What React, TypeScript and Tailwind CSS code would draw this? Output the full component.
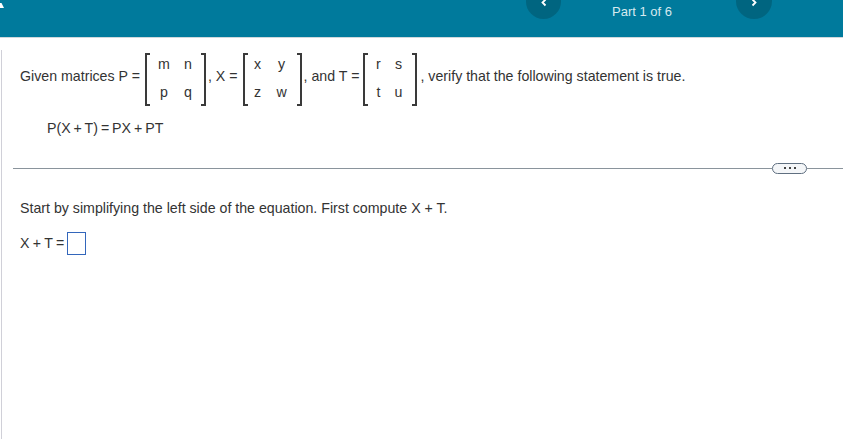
function Bracket({ side }: { side: "l" | "r" }) {
  return (
    <div
      className={
        side === "l"
          ? "w-[5px] h-[53px] mt-[4px] border-l-2 border-y-2 border-[#3a3a3a]"
          : "w-[5px] h-[53px] mt-[4px] border-r-2 border-y-2 border-[#3a3a3a]"
      }
    />
  );
}

function Matrix({ rows, inner }: { rows: string[][]; inner: string }) {
  return (
    <div className="flex items-center">
      <Bracket side="l" />
      <div className={inner}>
        {rows.flat().map((c, i) => (
          <span key={i} className="text-center leading-[16px]">
            {c}
          </span>
        ))}
      </div>
      <Bracket side="r" />
    </div>
  );
}

export default function App() {
  return (
    <div className="w-[843px] h-[439px] overflow-hidden bg-white font-['Liberation_Sans',Arial,sans-serif] text-[14.2px] text-[#333333]">
      <header className="h-[38px] bg-[#007a9c] border-b border-[#cfd8dc] flex items-start">
        <svg width="4" height="9" viewBox="0 0 4 9" className="shrink-0">
          <path d="M0 3 L1.5 3 L4 8 L0 8 Z" fill="#ffffff" />
        </svg>
        <div className="ml-[522px] w-[35px] h-[19px] rounded-b-full bg-[#006580] flex justify-center items-start">
          <svg width="8" height="8" viewBox="0 0 8 8" className="-mt-[1px]">
            <path d="M5.5 0.5 L2.5 3.5 L5.5 6.5" fill="none" stroke="#ffffff" strokeWidth="1.8" />
          </svg>
        </div>
        <div className="w-[175px] pr-[13px] text-center text-[13px] leading-[15px] pt-[4px] text-[#d5e9ef]">Part 1 of 6</div>
        <div className="w-[36px] h-[19px] rounded-b-full bg-[#006580] flex justify-center items-start">
          <svg width="8" height="8" viewBox="0 0 8 8" className="-mt-[1px]">
            <path d="M2.5 0.5 L5.5 3.5 L2.5 6.5" fill="none" stroke="#ffffff" strokeWidth="1.8" />
          </svg>
        </div>
      </header>

      <main className="h-[401px] ml-[1px] border-l border-[#d0d0d8] pl-[18px]">
        <div className="flex items-center h-[54px] mt-[12px]">
          <span>Given matrices P =</span>
          <div className="ml-[5px]">
            <Matrix inner="w-[51px] grid grid-cols-[28px_20px] gap-y-[12px] mt-[2px]" rows={[["m", "n"], ["p", "q"]]} />
          </div>
          <span className="ml-[2px]">, X =</span>
          <div className="ml-[5px]">
            <Matrix inner="w-[49px] grid grid-cols-[20px_28px] gap-y-[12px] mt-[2px]" rows={[["x", "y"], ["z", "w"]]} />
          </div>
          <span className="ml-[2px]">, and T =</span>
          <div className="ml-[4px]">
            <Matrix inner="w-[44px] grid grid-cols-[20px_20px] gap-y-[12px] mt-[2px]" rows={[["r", "s"], ["t", "u"]]} />
          </div>
          <span className="ml-[3px]">, verify that the following statement is true.</span>
        </div>

        <p className="ml-[27px] mt-[16px] leading-[16px] [word-spacing:-1px]">P(X + T) = PX + PT</p>

        <div className="mt-[26px] flex items-center h-[12px] -ml-[7px]">
          <div className="w-[759px] h-px bg-[#8a949c]" />
          <div className="w-[35px] h-[11px] rounded-full border border-[#5f6f80] bg-[#f4f6f8] flex items-center justify-center gap-[3px]">
            <span className="w-[2px] h-[2px] bg-[#444444]" />
            <span className="w-[2px] h-[2px] bg-[#444444]" />
            <span className="w-[2px] h-[2px] bg-[#444444]" />
          </div>
          <div className="w-[36px] h-px shrink-0 bg-[#8a949c]" />
        </div>

        <p className="mt-[26px] leading-[16px]">Start by simplifying the left side of the equation. First compute X + T.</p>

        <div className="mt-[16px] flex items-center">
          <span className="[word-spacing:-0.6px]">X + T =</span>
          <div className="ml-[3px] w-[19px] h-[23px] border border-[#3366bb]" />
        </div>
      </main>
    </div>
  );
}
